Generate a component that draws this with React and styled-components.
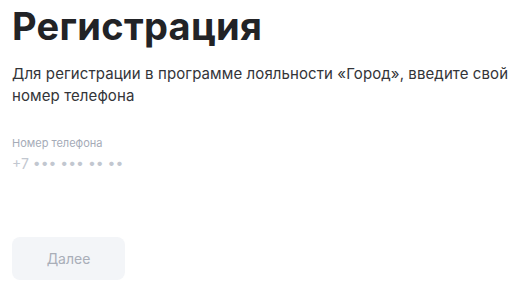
import styled, { createGlobalStyle } from "styled-components";

const Global = createGlobalStyle`
    body {
        margin: 0;
        background: #fff;
        font-family: Inter, "Noto Sans", sans-serif;
    }
`

const Page = styled.div`
    display: flex;
    flex-direction: column;
    padding: 3px 12px 0;
    width: 532px;
    height: 296px;
    box-sizing: border-box;
`

const Title = styled.h1`
    margin: 0;
    font-size: 38px;
    font-weight: 700;
    line-height: 46px;
    color: #222326;
    letter-spacing: 0.3px;
`

const Lead = styled.p`
    margin: 14px 0 0;
    font-size: 15px;
    line-height: 22px;
    color: #333438;
    letter-spacing: 0.1px;
    max-width: 512px;
`

const Field = styled.div`
    display: flex;
    flex-direction: column;
    margin-top: 29px;
    gap: 5px;
`

const Label = styled.label`
    font-size: 11px;
    line-height: 14px;
    color: #a5abb7;
`

const Input = styled.input`
    border: none;
    outline: none;
    padding: 0;
    font-family: inherit;
    font-size: 14px;
    line-height: 18px;
    color: #333;
    &::placeholder {
        color: #c2c7d0;
    }
`

const Button = styled.button`
    margin-top: 64px;
    width: 113px;
    height: 43px;
    border: none;
    border-radius: 8px;
    background: #f3f5f8;
    color: #a9aeb8;
    font-family: inherit;
    font-size: 14px;
`

const App = () => {
    return (
        <Page>
            <Global />
            <Title>Регистрация</Title>
            <Lead>Для регистрации в программе лояльности «Город», введите свой номер телефона</Lead>
            <Field>
                <Label>Номер телефона</Label>
                <Input placeholder="+7 ••• ••• •• ••" />
            </Field>
            <Button disabled>Далее</Button>
        </Page>
    )
}

export default App
